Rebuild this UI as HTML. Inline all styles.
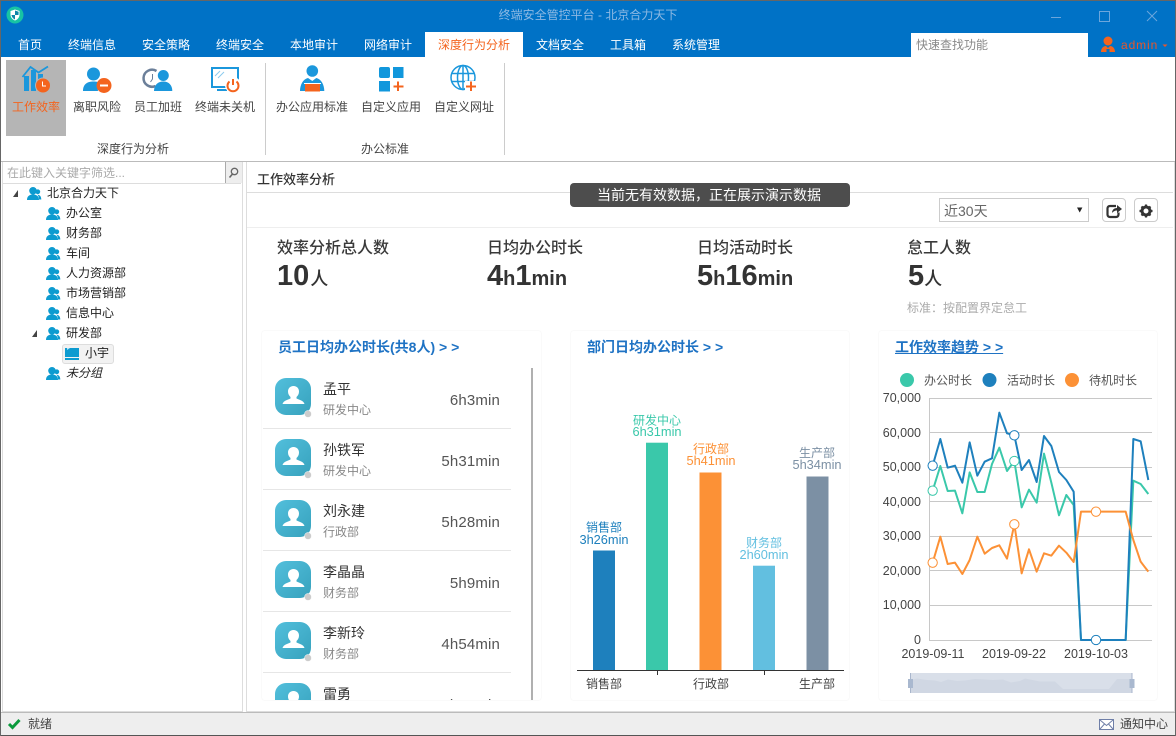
<!DOCTYPE html>
<html lang="zh"><head><meta charset="utf-8"><title>终端安全管控平台</title>
<style>
html,body{margin:0;padding:0;background:#fff}
#w{position:relative;width:1176px;height:736px;overflow:hidden;background:#fff;font-family:"Liberation Sans","Noto Sans CJK SC",sans-serif;font-size:12px;color:#333}
#w div,#w span.t{position:absolute}
.t{position:absolute;white-space:nowrap;line-height:1}
.c{transform:translateX(-50%)}
.r{transform:translateX(-100%)}
svg{position:absolute;left:0;top:0}
.b{font-weight:bold}
.tree{font-size:12px;color:#222}
.name{font-size:14px;color:#333}
.dept{font-size:12px;color:#888}
.time{font-size:15px;color:#555;letter-spacing:.15px}
.link{font-size:14px;font-weight:bold;color:#1f73c4}
.st{font-size:16px;color:#3a3a3a;font-weight:500}
.big{font-size:29px;font-weight:bold;color:#333}
.unit{font-size:20px;font-weight:bold;color:#333}
.rb{font-size:12px;color:#444}
.tab{font-size:12px;color:#fff}
.card{border:1px solid #fafafa;border-radius:4px;box-sizing:border-box}
</style></head><body>
<div id="w">
<!-- backgrounds -->
<div style="left:0;top:0;width:1176px;height:57px;background:#0072c6"></div>
<div style="left:0;top:0;width:1176px;height:1px;background:#666"></div>
<div style="left:425px;top:32px;width:98px;height:25px;background:#fff"></div>
<div style="left:911px;top:33px;width:177px;height:24px;background:#fff"></div>
<div style="left:6px;top:60px;width:60px;height:76px;background:#b5b5b5"></div>
<div style="left:265px;top:63px;width:1px;height:92px;background:#ccc"></div>
<div style="left:504px;top:63px;width:1px;height:92px;background:#ccc"></div>
<div style="left:0;top:161px;width:1176px;height:1px;background:#bbb"></div>
<div style="left:2px;top:162px;width:239px;height:549px;border:1px solid #ddd;border-top:0"></div>
<div style="left:3px;top:183px;width:238px;height:1px;background:#ddd"></div>
<div style="left:225px;top:162px;width:16px;height:21px;background:#eee;border-left:1px solid #aaa"></div>
<div style="left:246px;top:162px;width:927px;height:549px;border:1px solid #ddd;border-top:0"></div>
<div style="left:247px;top:192px;width:926px;height:1px;background:#ddd"></div>
<div style="left:247px;top:227px;width:926px;height:1px;background:#eee"></div>
<div class="card" style="left:261px;top:330px;width:281px;height:371px"></div>
<div class="card" style="left:570px;top:330px;width:280px;height:371px"></div>
<div class="card" style="left:878px;top:330px;width:280px;height:371px"></div>
<div style="left:0;top:712px;width:1176px;height:23px;background:#eee;border-top:1px solid #bbb"></div>
<div style="left:0;top:735px;width:1176px;height:1px;background:#555"></div>
<div style="left:0;top:0;width:1px;height:736px;background:#666"></div>
<div style="left:1175px;top:0;width:1px;height:736px;background:#666"></div>
<div style="left:570px;top:183px;width:280px;height:24px;background:#4d4d4d;border-radius:4px"></div>
<div style="left:939px;top:198px;width:148px;height:22px;border:1px solid #ccc"></div>
<div style="left:1102px;top:198px;width:22px;height:22px;border:1px solid #ccc;border-radius:4px"></div>
<div style="left:1134px;top:198px;width:22px;height:22px;border:1px solid #ccc;border-radius:4px"></div>
<div style="left:62px;top:344px;width:50px;height:18px;background:#f2f2f2;border:1px solid #ddd;border-radius:3px"></div>
<div style="left:531px;top:368px;width:2px;height:332px;background:#b0b0b0"></div>

<!-- Title and tabs -->
<span class="t c" style="left:588px;top:9px;color:#8db9e3">终端安全管控平台 - 北京合力天下</span>
<span class="t c tab" style="left:30px;top:39px">首页</span>
<span class="t c tab" style="left:92px;top:39px">终端信息</span>
<span class="t c tab" style="left:166px;top:39px">安全策略</span>
<span class="t c tab" style="left:240px;top:39px">终端安全</span>
<span class="t c tab" style="left:314px;top:39px">本地审计</span>
<span class="t c tab" style="left:388px;top:39px">网络审计</span>
<span class="t c tab" style="left:474px;top:39px;color:#f4641e">深度行为分析</span>
<span class="t c tab" style="left:560px;top:39px">文档安全</span>
<span class="t c tab" style="left:628px;top:39px">工具箱</span>
<span class="t c tab" style="left:696px;top:39px">系统管理</span>
<span class="t" style="left:916px;top:39px;color:#888">快速查找功能</span>
<span class="t" style="left:1121px;top:39px;color:#e8562a;letter-spacing:.9px">admin</span>

<!-- Ribbon -->
<span class="t c rb" style="left:36px;top:101px;color:#f4641e">工作效率</span>
<span class="t c rb" style="left:97px;top:101px">离职风险</span>
<span class="t c rb" style="left:158px;top:101px">员工加班</span>
<span class="t c rb" style="left:225px;top:101px">终端未关机</span>
<span class="t c rb" style="left:312px;top:101px">办公应用标准</span>
<span class="t c rb" style="left:391px;top:101px">自定义应用</span>
<span class="t c rb" style="left:464px;top:101px">自定义网址</span>
<span class="t c rb" style="left:133px;top:143px">深度行为分析</span>
<span class="t c rb" style="left:385px;top:143px">办公标准</span>

<!-- Tree -->
<span class="t" style="left:7px;top:167px;color:#aaa">在此键入关键字筛选...</span>
<span class="t tree" style="left:47px;top:187px">北京合力天下</span>
<span class="t tree" style="left:66px;top:207px">办公室</span>
<span class="t tree" style="left:66px;top:227px">财务部</span>
<span class="t tree" style="left:66px;top:247px">车间</span>
<span class="t tree" style="left:66px;top:267px">人力资源部</span>
<span class="t tree" style="left:66px;top:287px">市场营销部</span>
<span class="t tree" style="left:66px;top:307px">信息中心</span>
<span class="t tree" style="left:66px;top:327px">研发部</span>
<span class="t tree" style="left:85px;top:347px">小宇</span>
<span class="t tree" style="left:66px;top:367px;font-style:italic">未分组</span>

<!-- Header -->
<span class="t b" style="left:257px;top:173px;font-size:13px;color:#333;font-weight:500">工作效率分析</span>
<span class="t c" style="left:709px;top:188px;font-size:14px;color:#fff">当前无有效数据，正在展示演示数据</span>
<span class="t" style="left:944px;top:204px;font-size:14px;color:#666">近30天</span>

<!-- Stats -->
<span class="t st" style="left:277px;top:241px">效率分析总人数</span>
<span class="t st" style="left:487px;top:241px">日均办公时长</span>
<span class="t st" style="left:697px;top:241px">日均活动时长</span>
<span class="t st" style="left:907px;top:241px">怠工人数</span>
<span class="t" style="left:277px;top:262px"><span class="big">10</span><span class="unit" style="font-weight:500;font-size:18px;margin-left:1px">人</span></span>
<span class="t" style="left:487px;top:262px"><span class="big">4</span><span class="unit">h</span><span class="big">1</span><span class="unit">min</span></span>
<span class="t" style="left:697px;top:262px"><span class="big">5</span><span class="unit">h</span><span class="big">16</span><span class="unit">min</span></span>
<span class="t" style="left:908px;top:262px"><span class="big">5</span><span class="unit" style="font-weight:500;font-size:18px">人</span></span>
<span class="t" style="left:907px;top:302px;color:#aaa">标准：按配置界定怠工</span>

<span class="t link" style="left:278px;top:340px">员工日均办公时长(共8人) &gt; &gt;</span>
<span class="t link" style="left:587px;top:340px">部门日均办公时长 &gt; &gt;</span>
<span class="t link" style="left:895px;top:340px;text-decoration:underline">工作效率趋势 &gt; &gt;</span>

<!-- List -->
<div style="left:263px;top:368px;width:248px;height:332px;overflow:hidden">
  <div style="left:0;top:60px;width:248px;height:1px;background:#e6e6e6"></div>
  <div style="left:0;top:121px;width:248px;height:1px;background:#e6e6e6"></div>
  <div style="left:0;top:182px;width:248px;height:1px;background:#e6e6e6"></div>
  <div style="left:0;top:243px;width:248px;height:1px;background:#e6e6e6"></div>
  <div style="left:0;top:304px;width:248px;height:1px;background:#e6e6e6"></div>
  <svg width="248" height="332" style="left:0;top:0">
    <defs>
      <linearGradient id="av" x1="0" y1="0" x2="1" y2="1"><stop offset="0" stop-color="#52bfdc"/><stop offset="1" stop-color="#37a2bd"/></linearGradient>
      <g id="a">
        <rect x="12" y="10" width="36" height="37" rx="11" fill="url(#av)"/>
        <path d="M30.500 18c-3.500 0-5.500 2.500-5.500 5.500 0 2.500 1 4 2.500 5.500v1.500c-3 1.500-7 2-8 5.500h22c-1-3.500-5-4-8-5.500V29c1.500-1.500 2.500-3 2.500-5.500 0-3-2-5.500-5.500-5.500z" fill="#fff"/>
        <circle cx="45" cy="46" r="3.500" fill="#ccc" stroke="#fff" stroke-width=".5"/>
      </g>
    </defs>
    <use href="#a"/><use href="#a" y="61"/><use href="#a" y="122"/><use href="#a" y="183"/><use href="#a" y="244"/><use href="#a" y="305"/>
  </svg>
  <span class="t name" style="left:60px;top:14px">孟平</span><span class="t dept" style="left:60px;top:36px">研发中心</span><span class="t time r" style="left:237px;top:25px">6h3min</span>
  <span class="t name" style="left:60px;top:75px">孙铁军</span><span class="t dept" style="left:60px;top:97px">研发中心</span><span class="t time r" style="left:237px;top:86px">5h31min</span>
  <span class="t name" style="left:60px;top:136px">刘永建</span><span class="t dept" style="left:60px;top:158px">行政部</span><span class="t time r" style="left:237px;top:147px">5h28min</span>
  <span class="t name" style="left:60px;top:197px">李晶晶</span><span class="t dept" style="left:60px;top:219px">财务部</span><span class="t time r" style="left:237px;top:208px">5h9min</span>
  <span class="t name" style="left:60px;top:258px">李新玲</span><span class="t dept" style="left:60px;top:280px">财务部</span><span class="t time r" style="left:237px;top:269px">4h54min</span>
  <span class="t name" style="left:60px;top:319px">雷勇</span><span class="t time r" style="left:237px;top:330px">4h44min</span>
</div>

<!-- Status -->
<span class="t" style="left:28px;top:718px;color:#444">就绪</span>
<span class="t" style="left:1120px;top:718px;color:#444">通知中心</span>

<svg width="1176" height="736" viewBox="0 0 1176 736" font-family="Liberation Sans, Noto Sans CJK SC, sans-serif">
<!-- logo -->
<circle cx="15" cy="15" r="8.500" fill="#17c3a4"/>
<path d="M15 9.500l4.500 1.500v3.500c0 3-2 5-4.500 6-2.500-1-4.500-3-4.500-6V11z" fill="#fff"/>
<path d="M15 10.500v4.500h-3.500c.2 2 1.700 3.600 3.500 4.500zM15 15h3.500c.1-1 .1-2 .1-3.200L15 10.500z" fill="#0b86a8"/>
<!-- window -->
<path d="M1051 17.500h10" stroke="#6ba6dc"/>
<rect x="1099.500" y="11.500" width="10" height="10" fill="none" stroke="#6ba6dc"/>
<path d="M1147 11l10 10M1157 11l-10 10" stroke="#6ba6dc"/>
<!-- admin -->
<circle cx="1108" cy="41" r="4.500" fill="#f4641e"/>
<path d="M1101 52c0-4 2.500-6 5-6l2 2 2-2c2.500 0 5 2 5 6h-5.500v-3h-3v3z" fill="#f4641e"/>
<path d="M1162.500 44.500h5l-2.500 2.500z" fill="#e8562a"/>

<!-- ribbon icons -->
<g fill="#1b97dc">
<rect x="24" y="76" width="5" height="15"/><rect x="31" y="70" width="5" height="21"/><rect x="38" y="74" width="5" height="17"/>
</g>
<path d="M22.500 77l8-10 8 5.500 9.500-6" fill="none" stroke="#1b97dc" stroke-width="1.800"/>
<circle cx="43" cy="85.500" r="7.500" fill="#f4641e" stroke="#b5b5b5"/>
<path d="M42.500 81.500v4.500h3.500" fill="none" stroke="#fff"/>

<circle cx="93.500" cy="74" r="6.500" fill="#1b97dc"/>
<path d="M83 91c0-7 4.500-9.500 10.500-9.500 3 0 6 .6 8 2.500-3 1.500-4 4-3.500 7z" fill="#1b97dc"/>
<circle cx="104" cy="85.500" r="7.500" fill="#f4641e"/>
<rect x="100" y="84.500" width="8" height="2" fill="#fff"/>

<path d="M156.500 71a8.500 8.500 0 1 0 -1 15" fill="none" stroke="#6b7f99" stroke-width="2.500"/>
<path d="M152.500 74v5l-2 3" fill="none" stroke="#6b7f99"/>
<circle cx="163.300" cy="75.500" r="5.500" fill="#1b97dc"/>
<path d="M154 91c0-6 4-9.500 9.300-9.500s9 3.500 9 9.500z" fill="#1b97dc"/>

<rect x="212" y="68" width="26" height="19" fill="none" stroke="#1b97dc" stroke-width="2"/>
<path d="M217 90h10" stroke="#1b97dc" stroke-width="2"/>
<path d="M215 76l5-5M218 78l6-6" stroke="#8ccbee"/>
<circle cx="233" cy="85" r="8" fill="#fff"/>
<path d="M229.500 81.500a5.500 5.500 0 1 0 7 0" fill="none" stroke="#f4641e" stroke-width="2"/>
<path d="M233 79v6" stroke="#f4641e" stroke-width="2"/>

<circle cx="312.300" cy="71" r="5.800" fill="#1b97dc"/>
<path d="M300 91c0-6 3-12 8-13l4.300 3 4-3c5 1 8 7 8 13z" fill="#1b97dc"/>
<rect x="305" y="84" width="15" height="7.500" fill="#f4641e"/>
<rect x="304" y="83" width="17" height="1" fill="#fff"/>

<g fill="#1197dc"><rect x="379" y="67" width="11" height="11" rx="2"/><rect x="393" y="67" width="10.500" height="11"/><rect x="379" y="81" width="11" height="10.500"/></g>
<path d="M398 81.500v9.500M393.500 86.500h10" stroke="#f4641e" stroke-width="2"/>

<g fill="none" stroke="#1b97dc" stroke-width="1.500">
<circle cx="463" cy="77.500" r="12"/><ellipse cx="463" cy="77.500" rx="5.500" ry="12"/>
<path d="M451.500 73.500h23M451.500 81.500h23M463 65.500v24"/></g>
<rect x="465" y="81" width="13" height="11" fill="#fff"/>
<path d="M471 81.500v9.500M466 86.500h10" stroke="#f4641e" stroke-width="2"/>

<!-- search glass -->
<circle cx="234.500" cy="171.500" r="3.200" fill="none" stroke="#666" stroke-width="1.300"/>
<path d="M232.500 174l-3 3.500" stroke="#666" stroke-width="1.600"/>

<!-- tree icons -->
<defs><g id="p">
<circle cx="10.800" cy="4.800" r="2.400" fill="#0d9bd0"/>
<path d="M10.500 7.800c2 0 3.800 1.500 3.800 4.700h-2.300c0-2-.5-3.500-1.500-4.700z" fill="#0d9bd0"/>
<circle cx="6" cy="3.800" r="3.800" fill="#0d9bd0"/>
<path d="M0 13c0-3.500 2-5.500 6-5.500s6 2 6 5.500z" fill="#0d9bd0"/>
</g></defs>
<use href="#p" x="27" y="187"/>
<use href="#p" x="46" y="207"/><use href="#p" x="46" y="227"/><use href="#p" x="46" y="247"/><use href="#p" x="46" y="267"/><use href="#p" x="46" y="287"/><use href="#p" x="46" y="307"/><use href="#p" x="46" y="327"/><use href="#p" x="46" y="367"/>
<path d="M18 190v7h-5z" fill="#444"/><path d="M37 330v7h-5z" fill="#444"/>
<rect x="65" y="348" width="14" height="9" fill="#0d9bd0"/><rect x="65" y="358" width="14" height="2" fill="#0d9bd0"/><path d="M67 350l3-2h-3z" fill="#bfe6f5"/>

<!-- toolbar -->
<path d="M1077 207.500l2.700 5 2.700-5z" fill="#222"/>
<path d="M1116 206h-6c-1.500 0-2.500 1-2.500 2.500v6c0 1.500 1 2.500 2.500 2.500h6c1.500 0 2.500-1 2.500-2.500v-2" fill="none" stroke="#333" stroke-width="2.200"/>
<path d="M1112 213c0-3 2-5 5-5v-3l5 4-5 4v-2.500c-2 0-4 1-5 2.500z" fill="#333"/>
<circle cx="1146" cy="211" r="4" fill="none" stroke="#333" stroke-width="3"/>
<path d="M1146 204.500v2M1146 215.500v2M1139.500 211h2M1150.500 211h2M1141.500 206.500l1.400 1.400M1149.100 214.100l1.400 1.400M1150.500 206.500l-1.400 1.400M1142.900 214.100l-1.400 1.400" stroke="#333" stroke-width="2.200"/>

<!-- bars -->
<rect x="593" y="550.500" width="22" height="119.500" fill="#1e80bd"/>
<rect x="646" y="442.700" width="22" height="227.300" fill="#3ac8aa"/>
<rect x="699.500" y="472.500" width="22" height="197.500" fill="#fc9136"/>
<rect x="753" y="565.700" width="22" height="104.300" fill="#62bfe0"/>
<rect x="806.500" y="476.500" width="22" height="193.500" fill="#7c90a4"/>
<path d="M577 670.500h267M657.500 670v5M764.500 670v5" stroke="#333" stroke-width="1" fill="none"/>
<g font-size="12" text-anchor="middle">
<text x="604" y="531.500" fill="#1e80bd">销售部</text><text x="604" y="544" fill="#1e80bd" font-size="12.800">3h26min</text>
<text x="657" y="424.500" fill="#3ac8aa">研发中心</text><text x="657" y="436" fill="#3ac8aa" font-size="12.800">6h31min</text>
<text x="711" y="453" fill="#fc9136">行政部</text><text x="711" y="465" fill="#fc9136" font-size="12.800">5h41min</text>
<text x="764" y="547" fill="#62bfe0">财务部</text><text x="764" y="559" fill="#62bfe0" font-size="12.800">2h60min</text>
<text x="817" y="457" fill="#7c90a4">生产部</text><text x="817" y="469" fill="#7c90a4" font-size="12.800">5h34min</text>
<text x="604" y="688" fill="#444">销售部</text><text x="711" y="688" fill="#444">行政部</text><text x="817" y="688" fill="#444">生产部</text>
</g>

<!-- line chart -->
<g stroke="#c8c8c8" fill="none">
<path d="M929 398.500h223M929 432.500h223M929 467.500h223M929 501.500h223M929 536.500h223M929 570.500h223M929 605.500h223M929 640.500h223M929.500 398v243"/>
</g>
<g font-size="12.500" fill="#444" text-anchor="end">
<text x="921" y="402">70,000</text><text x="921" y="437">60,000</text><text x="921" y="471">50,000</text><text x="921" y="506">40,000</text><text x="921" y="540">30,000</text><text x="921" y="575">20,000</text><text x="921" y="609">10,000</text><text x="921" y="644">0</text>
</g>
<g font-size="12.500" fill="#444" text-anchor="middle">
<text x="933" y="658">2019-09-11</text><text x="1014" y="658">2019-09-22</text><text x="1096" y="658">2019-10-03</text>
</g>
<circle cx="907" cy="380" r="7" fill="#3ac8aa"/><circle cx="989.500" cy="380" r="7" fill="#1e80bd"/><circle cx="1072" cy="380" r="7" fill="#fc9136"/>
<g font-size="12" fill="#555"><text x="924" y="384.500">办公时长</text><text x="1007" y="384.500">活动时长</text><text x="1089" y="384.500">待机时长</text></g>

<g transform="translate(880,360) scale(.33333)" fill="none" stroke-width="6" stroke-linejoin="round">
<polyline stroke="#3ac8aa" points="158,392 181,318 203,393 225,392 247,460 269,337 292,396 314,396 336,312 358,263 381,333 403,303 425,442 447,389 470,428 492,281 514,368 537,466 559,405 581,435 603,840 626,840 648,840 670,840 693,840 715,840 737,840 760,362 782,372 805,402"/>
<polyline stroke="#1e80bd" points="158,317 181,237 203,323 225,317 247,368 269,247 292,347 314,305 336,295 358,158 381,220 403,226 425,330 447,300 470,366 492,228 514,258 537,336 559,360 581,395 603,840 626,840 648,840 670,840 693,840 715,840 737,840 760,237 782,244 805,360"/>
<polyline stroke="#fc9136" points="158,608 181,530 203,612 225,608 247,642 269,600 292,530 314,581 336,564 358,556 381,596 403,493 425,640 447,568 470,635 492,580 514,587 537,557 559,578 581,606 603,455 626,455 648,455 670,455 693,455 715,455 737,455 760,540 782,605 805,635"/>
<g fill="#fff" stroke-width="3">
<circle cx="158" cy="392" r="14" stroke="#3ac8aa"/><circle cx="403" cy="303" r="14" stroke="#3ac8aa"/>
<circle cx="158" cy="317" r="14" stroke="#1e80bd"/><circle cx="403" cy="226" r="14" stroke="#1e80bd"/><circle cx="648" cy="840" r="14" stroke="#1e80bd"/>
<circle cx="158" cy="608" r="14" stroke="#fc9136"/><circle cx="403" cy="493" r="14" stroke="#fc9136"/><circle cx="648" cy="455" r="14" stroke="#fc9136"/>
</g></g>

<!-- data zoom -->
<rect x="910" y="673" width="222" height="20" fill="#d9dfe9"/>
<path d="M911 680L917 678.500 927 680 935 680.500 941 682 948 679.500 957 681 965 680.500 975 679 985 679.500 993 680 1003 679.500 1011 682.500 1020 681 1025 678.500 1040 681.500 1055 681.500 1063 689 1109 689 1117 679 1132 679V693H911z" fill="#d0d7e3"/>
<path d="M910.500 673v20M1132 673v20" stroke="#a9b6cc"/>
<rect x="908" y="679" width="5" height="9" fill="#a9b8cf"/><rect x="1129.500" y="679" width="5" height="9" fill="#a9b8cf"/>

<!-- status icons -->
<path d="M9 724l3.500 3.500 7-7.500" fill="none" stroke="#0a9a3c" stroke-width="3"/>
<rect x="1099.500" y="719.500" width="14" height="10" fill="#fff" stroke="#6f7fa8"/>
<path d="M1100 720l6.500 5.500 6.500-5.500M1100 729l4.500-5M1113 729l-4.500-5" fill="none" stroke="#6f7fa8"/>
</svg>
</div>
</body></html>
